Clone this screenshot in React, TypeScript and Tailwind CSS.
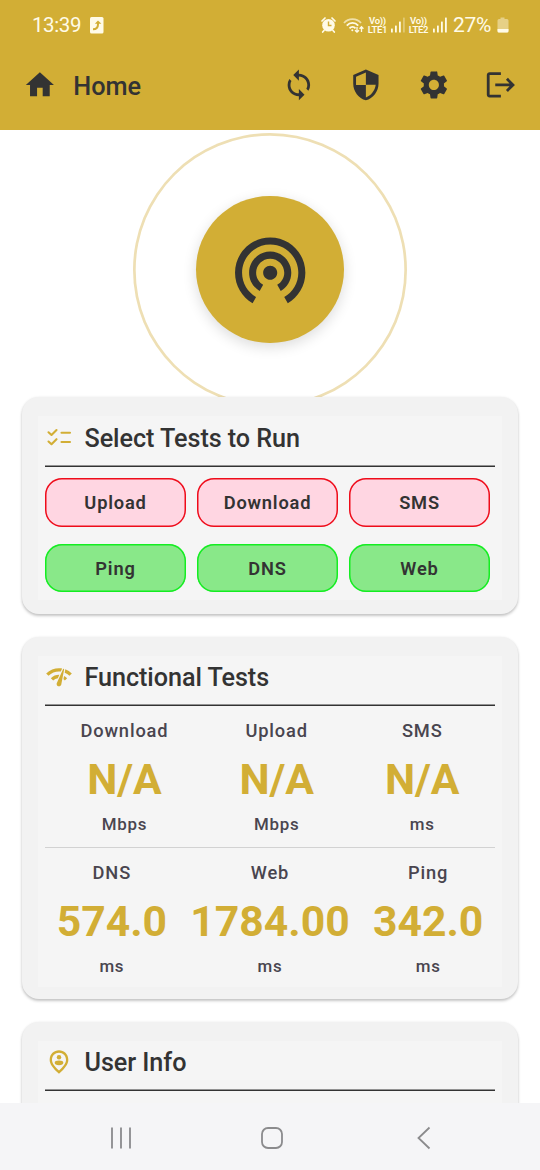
import type { ReactNode } from "react";
import {
  MdHome,
  MdSync,
  MdSecurity,
  MdSettings,
  MdLogout,
  MdWifiTethering,
  MdNetworkCheck,
} from "react-icons/md";

function Signal({ faded }: { faded: number }) {
  const bars = [4, 7, 11, 15];
  return (
    <svg width="14" height="16" viewBox="0 0 14 16" fill="#fffbe8">
      {bars.map((h, i) => (
        <rect key={h} x={i * 4} y={15.5 - h} width="1.8" height={h} rx="0.5" opacity={i >= faded ? 0.35 : 1} />
      ))}
    </svg>
  );
}

function Volte({ line }: { line: string }) {
  return (
    <div className="flex w-[21px] flex-col items-center text-[9.5px] leading-[9px] font-semibold tracking-[-0.3px] whitespace-nowrap">
      <span>Vo))</span>
      <span>{line}</span>
    </div>
  );
}

function StatusBar() {
  return (
    <div className="flex h-[50px] items-center pr-[31px] pl-[32px] text-[#fffbe8]">
      <span className="w-[58px] text-[20.5px] tracking-[-0.4px]">13:39</span>
      <svg width="14" height="17" viewBox="0 0 14 17">
        <rect width="13.5" height="16.5" rx="1.5" fill="#fffbe8" />
        <path d="M3 12.3c3.3 0 5-1.2 5-5V5.500" fill="none" stroke="#d2ae35" strokeWidth="2" />
        <path d="M4.800 6.700 8 3.500l3.400 3.200z" fill="#d2ae35" />
      </svg>
      <div className="ml-auto flex items-center">
        <svg width="16" height="16" viewBox="0 0 16 16" className="mr-[6px]">
          <circle cx="7.500" cy="8.300" r="6.300" fill="#fffbe8" />
          <path d="M1 4 4 1M14 4l-3-3M3 13.500l-1.300 1.500M12 13.500l1.300 1.500" stroke="#fffbe8" strokeWidth="1.700" strokeLinecap="round" />
          <path d="M7.500 4.500v4h3" fill="none" stroke="#d2ae35" strokeWidth="1.400" />
        </svg>
        <svg width="22" height="17" viewBox="0 0 22 17" fill="none" stroke="#fffbe8" strokeWidth="1.800" className="mr-[2px]">
          <path d="M1 6c4.500-5.200 12.500-5.200 17 0" opacity=".65" />
          <path d="M3.800 8.700c3.200-3.700 8.200-3.700 11.400 0" />
          <path d="M6.500 11.300c1.700-1.800 4.300-1.800 6 0" />
          <circle cx="9.300" cy="13.300" r="1" fill="#fffbe8" stroke="none" />
          <path d="M14 10v5M12 13.200l2 2 2-2M18.500 15v-5M16.600 11.800l1.900-2 1.900 2" strokeWidth="1.300" />
        </svg>
        <Volte line="LTE1" />
        <div className="mr-[3px] ml-[3px]">
          <Signal faded={3} />
        </div>
        <Volte line="LTE2" />
        <div className="mr-[6px] ml-[4px]">
          <Signal faded={4} />
        </div>
        <span className="w-[44px] pt-[1.500px] text-[21px] leading-[31px] tracking-[-0.3px]">27%</span>
        <svg width="12" height="16" viewBox="0 0 12 16">
          <path d="M3.500.5h4v1.500H10a1.500 1.500 0 0 1 1.500 1.500V14a1.500 1.500 0 0 1-1.500 1.500H2A1.500 1.500 0 0 1 .5 14V3.500A1.500 1.500 0 0 1 2 2h1.500z" fill="#fffbe8" opacity=".45" />
          <path d="M.5 12h11v2a1.500 1.500 0 0 1-1.500 1.500H2A1.500 1.500 0 0 1 .5 14z" fill="#fffbe8" />
        </svg>
      </div>
    </div>
  );
}

function AppBar() {
  return (
    <div className="flex h-[70px] items-center pr-[22px] pl-[22.500px] text-[#333]">
      <MdHome size={33.75} />
      <h1 className="ml-[17px] pt-[3px] text-[25.3px] leading-[30px] font-medium">Home</h1>
      <div className="ml-auto flex gap-[33.75px]">
        <MdSync size={33.75} />
        <MdSecurity size={33.75} />
        <MdSettings size={33.75} />
        <MdLogout size={33.75} />
      </div>
    </div>
  );
}

function Card({ icon, title, className, children }: { icon: ReactNode; title: string; className: string; children?: ReactNode }) {
  return (
    <section className={`mx-[22px] shrink-0 rounded-[17px] bg-[#f2f2f2] px-[16px] shadow-[0_2px_3px_rgba(0,0,0,0.22),0_0_3px_rgba(0,0,0,0.06)] ${className}`}>
      <div className="h-full bg-[#f5f5f5] px-[7px]">
        <div className="flex h-[50.500px] items-center pb-[6px] shadow-[inset_0_-1.5px_0_#333]">
          <div className="flex w-[39.500px] shrink-0 pb-[2px]">{icon}</div>
          <h2 className="pt-[1px] text-[25.2px] leading-[30px] font-medium tracking-[-0.06px] whitespace-nowrap text-[#333]">{title}</h2>
        </div>
        {children}
      </div>
    </section>
  );
}

function TestButton({ label, on }: { label: string; on: boolean }) {
  const tone = on
    ? "bg-[#89e889] shadow-[inset_0_0_0_1.5px_#14ee22]"
    : "bg-[#ffd6e2] shadow-[inset_0_0_0_1.5px_#ee0c1a]";
  return (
    <button className={`flex h-[48.500px] items-center justify-center rounded-[17px] pt-[1.500px] text-[18.3px] font-[560] tracking-[0.8px] text-[#333] ${tone}`}>
      {label}
    </button>
  );
}

function Metric({ label, value, unit }: { label: string; value: string; unit: string }) {
  return (
    <div className="flex flex-col items-center text-[#49454f]">
      <span className="text-[18.3px] leading-[26px] font-[470] tracking-[0.85px]">{label}</span>
      <span className="mt-[6px] text-[42.7px] leading-[58px] font-bold text-[#d2ae35]">{value}</span>
      <span className="mt-[4px] text-[16.900px] leading-[24px] font-[480] tracking-[0.75px]">{unit}</span>
    </div>
  );
}

const ChecksIcon = () => (
  <svg width="28" height="28" viewBox="0 0 28 28" fill="none" stroke="#d2ae35" strokeWidth="2.100" strokeLinecap="round" strokeLinejoin="round">
    <path d="M3.500 9.300 6.500 12l5-5M3.500 18.500l3 2.700 5-5M16.500 9.700h8.500M16.500 19h8.500" />
  </svg>
);

const PinIcon = () => (
  <svg width="28" height="28" viewBox="0 0 24 24" fill="#d2ae35">
    <path d="M12 4c3.350 0 6 2.570 6 6.200 0 2.340-1.950 5.440-6 9.140-4.050-3.700-6-6.790-6-9.140C6 6.570 8.650 4 12 4m0-2c-4.200 0-8 3.220-8 8.200 0 3.320 2.670 7.250 8 11.800 5.330-4.550 8-8.480 8-11.800C20 5.220 16.200 2 12 2z" />
    <circle cx="12" cy="7.900" r="1.900" />
    <ellipse cx="12" cy="12.700" rx="3.700" ry="2" />
  </svg>
);

const tests = [
  { label: "Upload", on: false },
  { label: "Download", on: false },
  { label: "SMS", on: false },
  { label: "Ping", on: true },
  { label: "DNS", on: true },
  { label: "Web", on: true },
];

export default function App() {
  return (
    <div className="flex h-[1170px] w-[540px] flex-col overflow-hidden bg-white font-[Roboto,sans-serif]">
      <header className="flex h-[130px] shrink-0 flex-col bg-[#d2ae35]">
        <StatusBar />
        <AppBar />
      </header>

      <main className="flex h-[972.500px] shrink-0 flex-col overflow-hidden">
        <div className="flex h-[267px] shrink-0 justify-center overflow-hidden pt-[2.500px]">
          <div className="flex size-[274px] shrink-0 items-center justify-center rounded-full shadow-[inset_0_0_0_2.7px_#eedfb4]">
            <button className="flex size-[147.500px] items-center justify-center rounded-full bg-[#d2ae35] text-[#333] shadow-[0_4px_14px_rgba(0,0,0,0.14)]">
              <MdWifiTethering size={84.4} />
            </button>
          </div>
        </div>

        <Card title="Select Tests to Run" icon={<ChecksIcon />} className="h-[217px] pt-[19px] pb-[14px]">
          <div className="grid grid-cols-[141px_141px_141px] gap-x-[11px] gap-y-[17px] pt-[11.500px]">
            {tests.map((t) => (
              <TestButton key={t.label} {...t} />
            ))}
          </div>
        </Card>

        <Card title="Functional Tests" icon={<MdNetworkCheck size={28} color="#d2ae35" />} className="mt-[23px] h-[362px] pt-[18.500px] pb-[12px]">
          <div className="flex h-[142px] justify-around border-b border-[#d2d2d2] pt-[12px]">
            <Metric label="Download" value="N/A" unit="Mbps" />
            <Metric label="Upload" value="N/A" unit="Mbps" />
            <Metric label="SMS" value="N/A" unit="ms" />
          </div>
          <div className="flex justify-around pt-[12px]">
            <Metric label="DNS" value="574.0" unit="ms" />
            <Metric label="Web" value="1784.00" unit="ms" />
            <Metric label="Ping" value="342.0" unit="ms" />
          </div>
        </Card>

        <Card title="User Info" icon={<PinIcon />} className="mt-[23px] h-[220px] pt-[18.500px]" />
      </main>

      <nav className="flex grow items-center bg-[#f5f5f7] pt-[3.500px] pl-[109px]">
        <svg width="24" height="24" viewBox="0 0 24 24" stroke="#8b8b8d" strokeWidth="1.800">
          <path d="M3 1.500v21M12 1.500v21M21 1.500v21" />
        </svg>
        <svg width="24" height="24" viewBox="0 0 24 24" fill="none" stroke="#8b8b8d" strokeWidth="1.800" className="ml-[127px]">
          <rect x="2" y="2" width="20" height="20" rx="6" />
        </svg>
        <svg width="24" height="24" viewBox="0 0 24 24" fill="none" stroke="#8b8b8d" strokeWidth="1.800" className="ml-[128px]">
          <path d="M17.500 1.500 6.500 12l11 10.500" />
        </svg>
      </nav>
    </div>
  );
}
